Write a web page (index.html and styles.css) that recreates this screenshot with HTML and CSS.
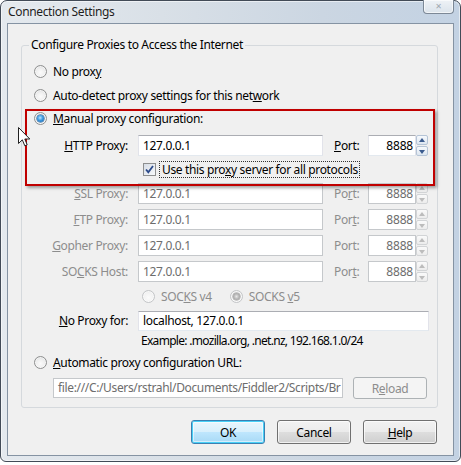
FILE: index.html
```html
<!DOCTYPE html>
<html>
<head>
<meta charset="utf-8">
<link rel="stylesheet" href="styles.css">
</head>
<body>
<div class="window">
  <div class="titlebar">
    <span class="title">Connection Settings</span>
    <div class="close"><span>✕</span></div>
  </div>
  <div class="client">
    <fieldset class="group">
      <legend>Configure Proxies to Access the Internet</legend>

      <div class="row r-radio h24"><span class="radio"></span><span>No prox<u>y</u></span></div>
      <div class="row r-radio h24"><span class="radio"></span><span>Auto-detect proxy settings for this net<u>w</u>ork</span></div>
      <div class="row r-radio h23"><span class="radio checked"></span><span><u>M</u>anual proxy configuration:</span></div>

      <div class="row field h31">
        <span class="lbl"><u>H</u>TTP Proxy:</span>
        <span class="input">127.0.0.1</span>
        <span class="plbl"><u>P</u>ort:</span>
        <span class="port">8888</span>
        <span class="spin"><i class="up"></i><i class="down"></i></span>
      </div>

      <div class="row cbrow h17">
        <span class="check"><svg width="9" height="9" viewBox="0 0 9 9"><path d="M1 4.5 L3.3 7.2 L8 1" fill="none" stroke="#2c4a8a" stroke-width="1.8"/></svg></span>
        <span class="focus">Use this pro<u>x</u>y server for all protocols</span>
      </div>

      <div class="row field dis h26 mt2">
        <span class="lbl"><u>S</u>SL Proxy:</span>
        <span class="input">127.0.0.1</span>
        <span class="plbl">Po<u>r</u>t:</span>
        <span class="port">8888</span>
        <span class="spin"><i class="up"></i><i class="down"></i></span>
      </div>
      <div class="row field dis h26">
        <span class="lbl"><u>F</u>TP Proxy:</span>
        <span class="input">127.0.0.1</span>
        <span class="plbl">Por<u>t</u>:</span>
        <span class="port">8888</span>
        <span class="spin"><i class="up"></i><i class="down"></i></span>
      </div>
      <div class="row field dis h26">
        <span class="lbl"><u>G</u>opher Proxy:</span>
        <span class="input">127.0.0.1</span>
        <span class="plbl">Port:</span>
        <span class="port">8888</span>
        <span class="spin"><i class="up"></i><i class="down"></i></span>
      </div>
      <div class="row field dis h26">
        <span class="lbl">SO<u>C</u>KS Host:</span>
        <span class="input">127.0.0.1</span>
        <span class="plbl">Por<u>t</u>:</span>
        <span class="port">8888</span>
        <span class="spin"><i class="up"></i><i class="down"></i></span>
      </div>

      <div class="row socks h24">
        <span class="radio dis"></span><span class="dtext">SOC<u>K</u>S v4</span>
        <span class="radio dis checked v5"></span><span class="dtext">SOCKS <u>v</u>5</span>
      </div>

      <div class="row field h25">
        <span class="lbl"><u>N</u>o Proxy for:</span>
        <span class="input wide">localhost, 127.0.0.1</span>
      </div>
      <div class="row example h14">Example: .mozilla.org, .net.nz, 192.168.1.0/24</div>

      <div class="row r-radio h30"><span class="radio"></span><span><u>A</u>utomatic proxy configuration URL:</span></div>
      <div class="row urlrow h22">
        <span class="input url">file:///C:/Users/rstrahl/Documents/Fiddler2/Scripts/Br</span>
        <span class="btn disabled">R<u>e</u>load</span>
      </div>
    </fieldset>

    <div class="buttons">
      <span class="btn default">OK</span>
      <span class="btn">Cancel</span>
      <span class="btn"><u>H</u>elp</span>
    </div>
  </div>

  <div class="highlight"></div>
  <svg class="cursor" width="13" height="21" viewBox="0 0 13 21">
    <path d="M0.5 0.5 L0.5 16.5 L4.3 12.8 L6.8 18.8 L9.2 17.8 L6.8 12 L11.8 12 Z" fill="#fff" stroke="#222" stroke-width="1" stroke-linejoin="round"/>
  </svg>
</div>
</body>
</html>
```

FILE: styles.css
```css
html, body {
  margin: 0;
  padding: 0;
}
body {
  width: 461px;
  height: 465px;
  background: #ffffff;
  font-family: "Noto Sans", "Open Sans", sans-serif;
  font-size: 12px;
  letter-spacing: -0.35px;
  color: #000;
  overflow: hidden;
}
u { text-decoration: underline; text-underline-offset: 1px; }

.window {
  position: relative;
  width: 461px;
  height: 462px;
  box-sizing: border-box;
  border: 1px solid #424b57;
  border-radius: 7px 7px 6px 6px;
  background: linear-gradient(to right, #e4e9ee 0%, #d9e0e7 35%, #cbd6e2 70%, #c3d2e3 100%);
  display: flex;
  flex-direction: column;
  box-shadow: inset 0 0 0 1px rgba(255,255,255,0.55);
}

.titlebar {
  height: 22px;
  display: flex;
  align-items: flex-start;
  padding-left: 7px;
}
.title {
  margin-top: 3px;
  line-height: 16px;
  color: #1e1e1e;
  text-shadow: 0 0 6px rgba(255,255,255,0.9);
}
.close {
  margin-left: auto;
  margin-right: 6px;
  margin-top: -1px;
  width: 29px;
  height: 13px;
  border: 1px solid #7c8896;
  border-top: none;
  border-radius: 0 0 4px 4px;
  background: linear-gradient(#eef2f6, #dbe3eb);
  display: flex;
  align-items: center;
  justify-content: center;
  box-shadow: inset 0 0 0 1px rgba(255,255,255,0.6);
}
.close span {
  font-size: 8px;
  line-height: 8px;
  color: #a0a8b0;
  font-family: "DejaVu Sans", sans-serif;
}

.client {
  flex: 1;
  margin: 0 6px 5px 6px;
  border: 1px solid #8593a3;
  background: #f0f0f0;
  display: flex;
  flex-direction: column;
}

.group {
  margin: 13px 15px 0 13px;
  padding: 6px 0 8px 0;
  border: 1px solid #d5d9dd;
  border-radius: 3px;
  min-width: 0;
}
.group legend {
  margin-left: 7px;
  padding: 0 2px;
  line-height: 16px;
  height: 16px;
}

.row {
  display: flex;
  align-items: center;
  white-space: nowrap;
}
.h14 { height: 14px; }
.h17 { height: 17px; }
.h22 { height: 22px; }
.h23 { height: 23px; }
.h24 { height: 24px; }
.h25 { height: 25px; }
.h26 { height: 26px; }
.h30 { height: 30px; }
.h31 { height: 31px; }
.mt2 { margin-top: 2px; }

.r-radio { padding-left: 12px; }
.r-radio .radio { margin-right: 6px; }

.radio {
  position: relative;
  flex: none;
  width: 13px;
  height: 13px;
  box-sizing: border-box;
  border-radius: 50%;
  border: 1px solid #8e8f8f;
  background: radial-gradient(circle at 50% 60%, #fbfbfb 0%, #f0f0f0 45%, #cfd1d3 100%);
  box-shadow: inset 0 0 0 1px rgba(255,255,255,0.6);
}
.radio.checked::after {
  content: "";
  position: absolute;
  left: 2px;
  top: 2px;
  width: 7px;
  height: 7px;
  border-radius: 50%;
  background: radial-gradient(circle at 45% 40%, #bfe6ff 0%, #3f9be0 45%, #0d5aa5 100%);
  box-shadow: 0 0 0 0.5px #0b4e8f;
}
.radio.dis {
  border-color: #c3c5c7;
  background: radial-gradient(circle at 50% 60%, #fbfbfb 0%, #f2f2f2 55%, #e2e3e4 100%);
}
.radio.dis.checked::after {
  background: radial-gradient(circle, #e8e8e8 0%, #b2b2b2 55%, #8c8c8c 100%);
  box-shadow: 0 0 0 0.5px #9a9a9a;
}

.field .lbl {
  width: 106px;
  text-align: right;
  flex: none;
}
.field .input {
  margin-left: 10px;
  width: 185px;
  height: 21px;
  flex: none;
}
.input {
  box-sizing: border-box;
  background: #fff;
  border: 1px solid #e2e3ea;
  border-top-color: #abadb3;
  border-bottom-color: #e3e9ef;
  padding: 0 4px;
  line-height: 19px;
  overflow: hidden;
  white-space: nowrap;
  display: block;
}
.field .plbl {
  margin-left: 11px;
  width: 34px;
  flex: none;
}
.port {
  box-sizing: border-box;
  width: 48px;
  height: 21px;
  flex: none;
  background: #fff;
  border: 1px solid #e2e3ea;
  border-top-color: #abadb3;
  border-bottom-color: #e3e9ef;
  text-align: right;
  padding-right: 2px;
  line-height: 19px;
  letter-spacing: -0.2px;
}
.spin {
  width: 12px;
  height: 21px;
  flex: none;
  display: flex;
  flex-direction: column;
  gap: 1px;
}
.spin i {
  position: relative;
  flex: 1;
  box-sizing: border-box;
  border: 1px solid #b5c4d6;
  border-radius: 2px;
  background: linear-gradient(#f6f9fc, #dde6f0);
}
.spin i::after {
  content: "";
  position: absolute;
  left: 2px;
  top: 2px;
  border-left: 3px solid transparent;
  border-right: 3px solid transparent;
}
.spin .up::after { border-bottom: 4px solid #3b5b8e; }
.spin .down::after { border-top: 4px solid #3b5b8e; top: 3px; }

.dis .lbl, .dis .plbl, .dtext { color: #8d8d8d; }
.dis .input, .dis .port {
  color: #6d6d6d;
  border-color: #c5c8cb;
}
.dis .spin i {
  border-color: #d2d4d6;
  background: linear-gradient(#fafafa, #ececec);
}
.dis .spin .up::after { border-bottom-color: #bcbcbc; }
.dis .spin .down::after { border-top-color: #bcbcbc; }

.cbrow { padding-left: 121px; }
.check {
  width: 13px;
  height: 13px;
  box-sizing: border-box;
  border: 1px solid #8e8f8f;
  background: linear-gradient(135deg, #d7dde6, #f7f9fb);
  display: flex;
  align-items: center;
  justify-content: center;
  flex: none;
}
.focus {
  margin-left: 3px;
  padding: 0 1px 0 2px;
  line-height: 15px;
  border: 1px dotted #333;
}

.socks { padding-left: 120px; }
.socks .radio { margin-right: 6px; }
.socks .radio.v5 { margin-left: 18px; }

.field .input.wide { width: 291px; height: 20px; line-height: 18px; }

.example { padding-left: 119px; letter-spacing: -0.7px; }

.urlrow { padding-left: 31px; }
.input.url {
  width: 290px;
  height: 20px;
  line-height: 18px;
  color: #6d6d6d;
  border-color: #c5c8cb;
  padding-left: 4px;
}

.btn {
  box-sizing: border-box;
  width: 74px;
  height: 24px;
  border: 1px solid #707070;
  border-radius: 3px;
  background: linear-gradient(#f2f2f2 0%, #ebebeb 48%, #dddddd 52%, #cfcfcf 100%);
  display: flex;
  align-items: center;
  justify-content: center;
  box-shadow: inset 0 0 0 1px rgba(255,255,255,0.7);
  flex: none;
}
.urlrow .btn { margin-left: 10px; height: 22px; }
.btn.disabled {
  border-color: #adb2b5;
  background: #f4f4f4;
  color: #8d8d8d;
  box-shadow: none;
}
.btn.default {
  border-color: #3c7fb1;
  box-shadow: inset 0 0 0 1px #48d0f7, inset 0 0 0 2px rgba(255,255,255,0.5);
  background: linear-gradient(#eaf6fd 0%, #d9f0fc 48%, #bee6fd 52%, #a7d9f5 100%);
}

.buttons {
  margin-top: 12px;
  padding-right: 16px;
  display: flex;
  justify-content: flex-end;
  gap: 12px;
}

.highlight {
  position: absolute;
  left: 24px;
  top: 108px;
  width: 410px;
  height: 77px;
  box-sizing: border-box;
  border: 2px solid #c00000;
  box-shadow: 2px 2px 3px rgba(0,0,0,0.35);
  pointer-events: none;
}

.cursor {
  position: absolute;
  left: 17px;
  top: 126px;
}
```
